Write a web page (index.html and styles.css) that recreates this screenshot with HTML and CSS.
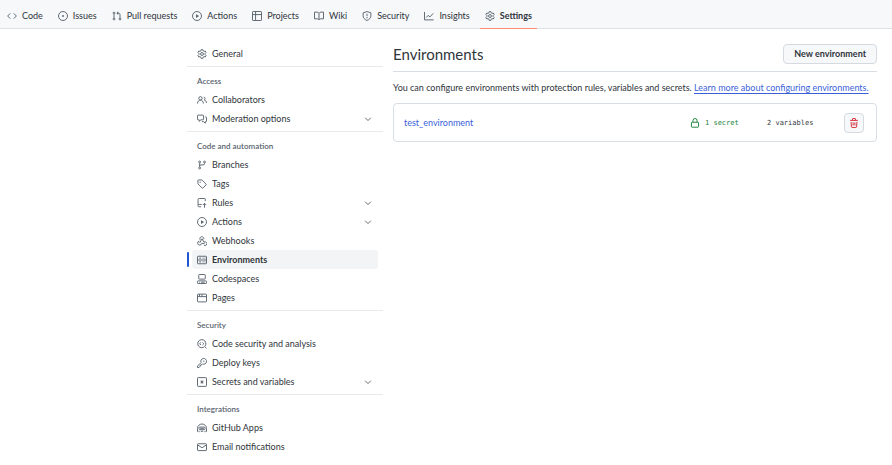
FILE: index.html
```html
<!DOCTYPE html>
<html lang="en">
<head>
  <meta charset="UTF-8">
  <meta name="viewport" content="width=device-width, initial-scale=1.0">
  <title>Environments</title>
  <link rel="stylesheet" href="styles.css">
</head>
<body>
  <!-- Icon set -->
  <svg class="sprite" aria-hidden="true">
    <symbol id="code" viewBox="0 0 16 16"><path d="M5.2 3.8 1 8l4.2 4.2M10.8 3.8 15 8l-4.2 4.2"/></symbol>
    <symbol id="issue" viewBox="0 0 16 16"><circle cx="8" cy="8" r="7.2"/><circle class="solid" cx="8" cy="8" r="1.5"/></symbol>
    <symbol id="pull" viewBox="0 0 16 16"><circle cx="3.2" cy="3.2" r="1.5"/><circle cx="3.2" cy="12.8" r="1.5"/><circle cx="12.8" cy="12.8" r="1.5"/><path d="M3.2 5v6M12.8 11V5.5a2 2 0 0 0-2-2H9"/><path class="solid" d="M10 .5v6l-3-3z"/></symbol>
    <symbol id="play" viewBox="0 0 16 16"><circle cx="8" cy="8" r="7.2"/><path class="solid" d="M6.4 5v6L11.3 8z"/></symbol>
    <symbol id="table" viewBox="0 0 16 16"><rect x=".8" y=".8" width="14.4" height="14.4" rx="1"/><path d="M.8 5.7h14.4M5.7.8v14.4"/></symbol>
    <symbol id="book" viewBox="0 0 16 16"><path d="M8 3.8C7.3 2.6 6.3 1.8 5 1.8H.8v10.7h4.7c1.2 0 2 .5 2.5 1.5.5-1 1.3-1.5 2.5-1.5h4.7V1.8H11c-1.3 0-2.3.8-3 2zM8 3.8V14"/></symbol>
    <symbol id="shield" viewBox="0 0 16 16"><path d="M8 .9 14.2 3v4.5c0 3.6-2.2 6-6.2 7.7C4 13.5 1.8 11.1 1.8 7.5V3zM8 4.5v3.7"/><circle class="solid" cx="8" cy="10.7" r="1"/></symbol>
    <symbol id="graph" viewBox="0 0 16 16"><path d="M.8 1.5v12.7h14.7M3.5 10.5 6.7 7l2.8 2.5 5.2-5.7"/></symbol>
    <symbol id="gear" viewBox="0 0 16 16"><circle cx="8" cy="8" r="2.3"/><path d="M6.7 1h2.6l.5 2 1.4.8 2-.6 1.3 2.3L13 7v2l1.5 1.5-1.3 2.3-2-.6-1.4.8-.5 2H6.7l-.5-2-1.4-.8-2 .6-1.3-2.3L3 9V7L1.500 5.500l1.300-2.300 2 .6L6.200 3z"/></symbol>
    <symbol id="people" viewBox="0 0 16 16"><circle cx="5.5" cy="5.3" r="2.7"/><path d="M.8 13.7c.3-3.5 2-5.6 4.7-5.6s4.400 2.100 4.700 5.600M10.800 3.500a2.200 2.200 0 0 1 .6 4.300c2.200.6 3.500 2.300 3.800 4.900"/></symbol>
    <symbol id="comments" viewBox="0 0 16 16"><path d="M1.7 1.8h7.8q1 0 1 1v5.5q0 1-1 1H6.3l-2.8 2.5V9.3H1.7q-1 0-1-1V2.8q0-1 1-1zM13 4.7h1.2q1 0 1 1v5.5q0 1-1 1h-.9v2.5l-2.8-2.5H8"/></symbol>
    <symbol id="branch" viewBox="0 0 16 16"><circle cx="4.2" cy="3.2" r="1.5"/><circle cx="4.2" cy="12.8" r="1.5"/><circle cx="12" cy="3.2" r="1.5"/><path d="M4.2 5v6M12 5v.8a2 2 0 0 1-2 2H6.2q-2 0-2 2"/></symbol>
    <symbol id="tag" viewBox="0 0 16 16"><path d="M2 1.5h5.3q.5 0 .8.3L14.3 8q.8.8 0 1.5l-4.800 4.800q-.8.8-1.500 0L1.800 8.100q-.3-.3-.3-.8V2z"/><circle class="solid" cx="5" cy="5" r="1"/></symbol>
    <symbol id="rules" viewBox="0 0 16 16"><path d="M13.2 5V1.8q0-1-1-1H3.5q-1.8 0-1.8 1.700v10q0 1.500 1.800 1.500h3M1.800 11.200q.5-.9 1.700-.9h4M12 15.500V8.800M9.300 11.200 12 8.500l2.700 2.700"/></symbol>
    <symbol id="webhook" viewBox="0 0 16 16"><path d="M5.1 6.1a3.2 3.2 0 1 1 5.7-.8M8 4.5l3.2 5.300a3 3 0 1 1-.3 4.700M8 4.500 4.300 11M3.800 8.100a3.200 3.200 0 1 0 3.600 3.700h4.800"/></symbol>
    <symbol id="server" viewBox="0 0 16 16"><rect x=".8" y="2" width="14.4" height="12" rx="1"/><path d="M.8 8h14.4M3.5 5h3M9 5h1.500M12 5h1.500M3.500 11h3M9 11h1.500M12 11h1.500"/></symbol>
    <symbol id="codespaces" viewBox="0 0 16 16"><rect x="2.8" y=".8" width="10.4" height="7.4" rx="1"/><rect x=".8" y="11" width="14.4" height="4.2" rx="1"/><path d="M3.2 13.1h1M6.7 13.1h5.5"/></symbol>
    <symbol id="browser" viewBox="0 0 16 16"><rect x=".8" y="1.8" width="14.4" height="12.4" rx="1"/><path d="M.8 5.8h14.4M4 2v3.5M8 2v3.5"/></symbol>
    <symbol id="codescan" viewBox="0 0 16 16"><path d="M12.3 12.1A6.5 6.5 0 1 0 11 13.1M12.2 12l3 3M6.3 5.5 4.2 7.5l2.100 2M8.800 5.500l2.100 2-2.100 2"/></symbol>
    <symbol id="key" viewBox="0 0 16 16"><path d="M6.5 7.2a4.6 4.6 0 1 1 2.3 2.3L7.5 10.8H6v1.500H4.500v1.500l-1.200 1.400H.8v-2.300z"/><circle class="solid" cx="11" cy="5" r="1.1"/></symbol>
    <symbol id="secret" viewBox="0 0 16 16"><rect x=".8" y="1" width="14.4" height="14" rx="1"/><path d="M8 5.3v5.4M5.7 6.6l4.6 2.8M10.3 6.6 5.7 9.4"/></symbol>
    <symbol id="hubot" viewBox="0 0 16 16"><path d="M.8 14V8.5a7.2 6.9 0 0 1 14.4 0V14M3.2 12.5v2.2M12.8 12.5v2.2M6 13.2h4"/><rect x="3.2" y="6.5" width="9.6" height="4.2" rx="1.5"/><path d="m5 8 1.4 1.2L8 8l1.6 1.2L11 8"/></symbol>
    <symbol id="mail" viewBox="0 0 16 16"><rect x=".8" y="2.8" width="14.4" height="10.9" rx="1"/><path d="m1 4.7 7 4.5 7-4.5"/></symbol>
    <symbol id="chevron" viewBox="0 0 16 16"><path d="M3.5 6 8 10.5 12.5 6"/></symbol>
    <symbol id="lock" viewBox="0 0 16 16"><rect x="2.3" y="6.8" width="11.4" height="7.9" rx="1"/><path d="M4.8 6.5V4a3.2 3.2 0 0 1 6.4 0v2.5"/></symbol>
    <symbol id="trash" viewBox="0 0 16 16"><path d="M1.8 3.8h12.4M5.6 3.5V1.7q0-.9.9-.9h3q.9 0 .9.9v1.8M3.3 6.3l.6 7.7q.1 1.1 1.2 1.1h5.8q1.1 0 1.2-1.1l.6-7.7M6.600 7v5M9.400 7v5"/></symbol>
  </svg>

  <nav class="repo-nav" aria-label="Repository">
    <a href="#"><svg class="icon"><use href="#code"/></svg>Code</a>
    <a href="#"><svg class="icon"><use href="#issue"/></svg>Issues</a>
    <a href="#"><svg class="icon"><use href="#pull"/></svg>Pull requests</a>
    <a href="#"><svg class="icon"><use href="#play"/></svg>Actions</a>
    <a href="#"><svg class="icon"><use href="#table"/></svg>Projects</a>
    <a href="#"><svg class="icon"><use href="#book"/></svg>Wiki</a>
    <a href="#"><svg class="icon"><use href="#shield"/></svg>Security</a>
    <a href="#"><svg class="icon"><use href="#graph"/></svg>Insights</a>
    <a href="#" class="selected" aria-current="page"><svg class="icon"><use href="#gear"/></svg>Settings</a>
  </nav>

  <div class="layout">
    <nav class="sidebar" aria-label="Settings">
      <ul>
        <li><a href="#"><svg class="icon"><use href="#gear"/></svg>General</a></li>
      </ul>

      <h2>Access</h2>
      <ul>
        <li><a href="#"><svg class="icon"><use href="#people"/></svg>Collaborators</a></li>
        <li><button type="button"><svg class="icon"><use href="#comments"/></svg>Moderation options<svg class="icon chevron"><use href="#chevron"/></svg></button></li>
      </ul>

      <h2>Code and automation</h2>
      <ul>
        <li><a href="#"><svg class="icon"><use href="#branch"/></svg>Branches</a></li>
        <li><a href="#"><svg class="icon"><use href="#tag"/></svg>Tags</a></li>
        <li><button type="button"><svg class="icon"><use href="#rules"/></svg>Rules<svg class="icon chevron"><use href="#chevron"/></svg></button></li>
        <li><button type="button"><svg class="icon"><use href="#play"/></svg>Actions<svg class="icon chevron"><use href="#chevron"/></svg></button></li>
        <li><a href="#"><svg class="icon"><use href="#webhook"/></svg>Webhooks</a></li>
        <li class="current"><a href="#" aria-current="page"><svg class="icon"><use href="#server"/></svg>Environments</a></li>
        <li><a href="#"><svg class="icon"><use href="#codespaces"/></svg>Codespaces</a></li>
        <li><a href="#"><svg class="icon"><use href="#browser"/></svg>Pages</a></li>
      </ul>

      <h2>Security</h2>
      <ul>
        <li><a href="#"><svg class="icon"><use href="#codescan"/></svg>Code security and analysis</a></li>
        <li><a href="#"><svg class="icon"><use href="#key"/></svg>Deploy keys</a></li>
        <li><button type="button"><svg class="icon"><use href="#secret"/></svg>Secrets and variables<svg class="icon chevron"><use href="#chevron"/></svg></button></li>
      </ul>

      <h2>Integrations</h2>
      <ul>
        <li><a href="#"><svg class="icon"><use href="#hubot"/></svg>GitHub Apps</a></li>
        <li><a href="#"><svg class="icon"><use href="#mail"/></svg>Email notifications</a></li>
      </ul>
    </nav>

    <main>
      <header class="page-head">
        <h1>Environments</h1>
        <button type="button" class="btn">New environment</button>
      </header>
      <p class="intro">You can configure environments with protection rules, variables and secrets. <a href="#">Learn more about configuring environments.</a></p>

      <div class="env-row">
        <a href="#" class="env-name">test_environment</a>
        <span class="secrets"><svg class="icon"><use href="#lock"/></svg>1 secret</span>
        <span class="variables">2 variables</span>
        <button type="button" class="btn btn-delete" aria-label="Delete test_environment"><svg class="icon"><use href="#trash"/></svg></button>
      </div>
    </main>
  </div>
</body>
</html>
```
FILE: styles.css
```css
* {
  box-sizing: border-box;
  margin: 0;
  padding: 0;
}

body {
  font-family: Lato, "Noto Sans", sans-serif;
  font-size: 9px;
  line-height: 12px;
  color: #30353b;
  background: #fff;
}

a {
  color: #3a5fd9;
  text-decoration: none;
}

button {
  font: inherit;
  color: inherit;
  cursor: pointer;
}

ul {
  list-style: none;
}

.sprite {
  display: none;
}

.icon {
  width: 10px;
  height: 10px;
  flex: none;
  fill: none;
  stroke: #59636e;
  stroke-width: 1.5;
}

.solid {
  fill: #59636e;
  stroke: none;
}

/* Top navigation */
.repo-nav {
  display: flex;
  gap: 5px;
  padding: 0 2px;
  background: #f6f8fa;
  border-bottom: 1px solid #dde2e7;
}

.repo-nav a {
  display: flex;
  align-items: center;
  gap: 5px;
  height: 29px;
  padding: 3px 5px 0;
  margin-bottom: -1px;
  color: #30353b;
  border-bottom: 1px solid transparent;
}

.repo-nav .selected {
  font-weight: 700;
  border-color: #fd8c73;
}

/* Page columns */
.layout {
  display: flex;
  gap: 10px;
  padding: 15px 15px 0 187px;
}

.sidebar {
  width: 196px;
  flex: none;
}

.sidebar h2 {
  margin-top: 3px;
  padding: 8px 10px 3px;
  border-top: 1px solid #e8ebee;
  font-size: 8px;
  font-weight: 600;
  color: #59636e;
}

.sidebar li {
  position: relative;
  margin: 0 5px;
}

.sidebar li a,
.sidebar li button {
  display: flex;
  align-items: center;
  gap: 5px;
  width: 100%;
  height: 19px;
  padding: 0 5px;
  border: 0;
  border-radius: 3px;
  background: none;
  color: #30353b;
}

.sidebar .chevron {
  margin-left: auto;
}

.sidebar .current a {
  background: #f3f4f6;
  font-weight: 700;
}

.sidebar .current::before {
  content: "";
  position: absolute;
  top: 2px;
  bottom: 2px;
  left: -5px;
  width: 2px;
  border-radius: 2px;
  background: #1f56d0;
}

/* Content */
main {
  flex: 1;
  min-width: 0;
}

.page-head {
  display: flex;
  align-items: center;
  justify-content: space-between;
  padding-bottom: 7px;
  border-bottom: 1px solid #d8dee4;
}

h1 {
  font-size: 15px;
  font-weight: 400;
  line-height: 20px;
}

.btn {
  height: 20px;
  padding: 0 10px;
  border: 1px solid #d5dae0;
  border-radius: 4px;
  background: #f6f8fa;
  font-weight: 700;
}

.intro {
  margin: 10px 0 9px;
}

.intro a {
  text-decoration: underline;
  text-underline-offset: 2px;
}

.env-row {
  display: flex;
  align-items: center;
  padding: 9px 12px 8px 10px;
  border: 1px solid #d8dee4;
  border-radius: 4px;
}

.env-name {
  flex: 1;
}

.secrets,
.variables {
  display: flex;
  align-items: center;
  gap: 5px;
  width: 77px;
  font-family: "DejaVu Sans Mono", monospace;
  font-size: 7px;
}

.secrets {
  color: #1a7f37;
}

.secrets .icon {
  stroke: #1a7f37;
}

.btn-delete {
  display: flex;
  align-items: center;
  padding: 0 4px;
}

.btn-delete .icon {
  stroke: #d1242f;
}
```
